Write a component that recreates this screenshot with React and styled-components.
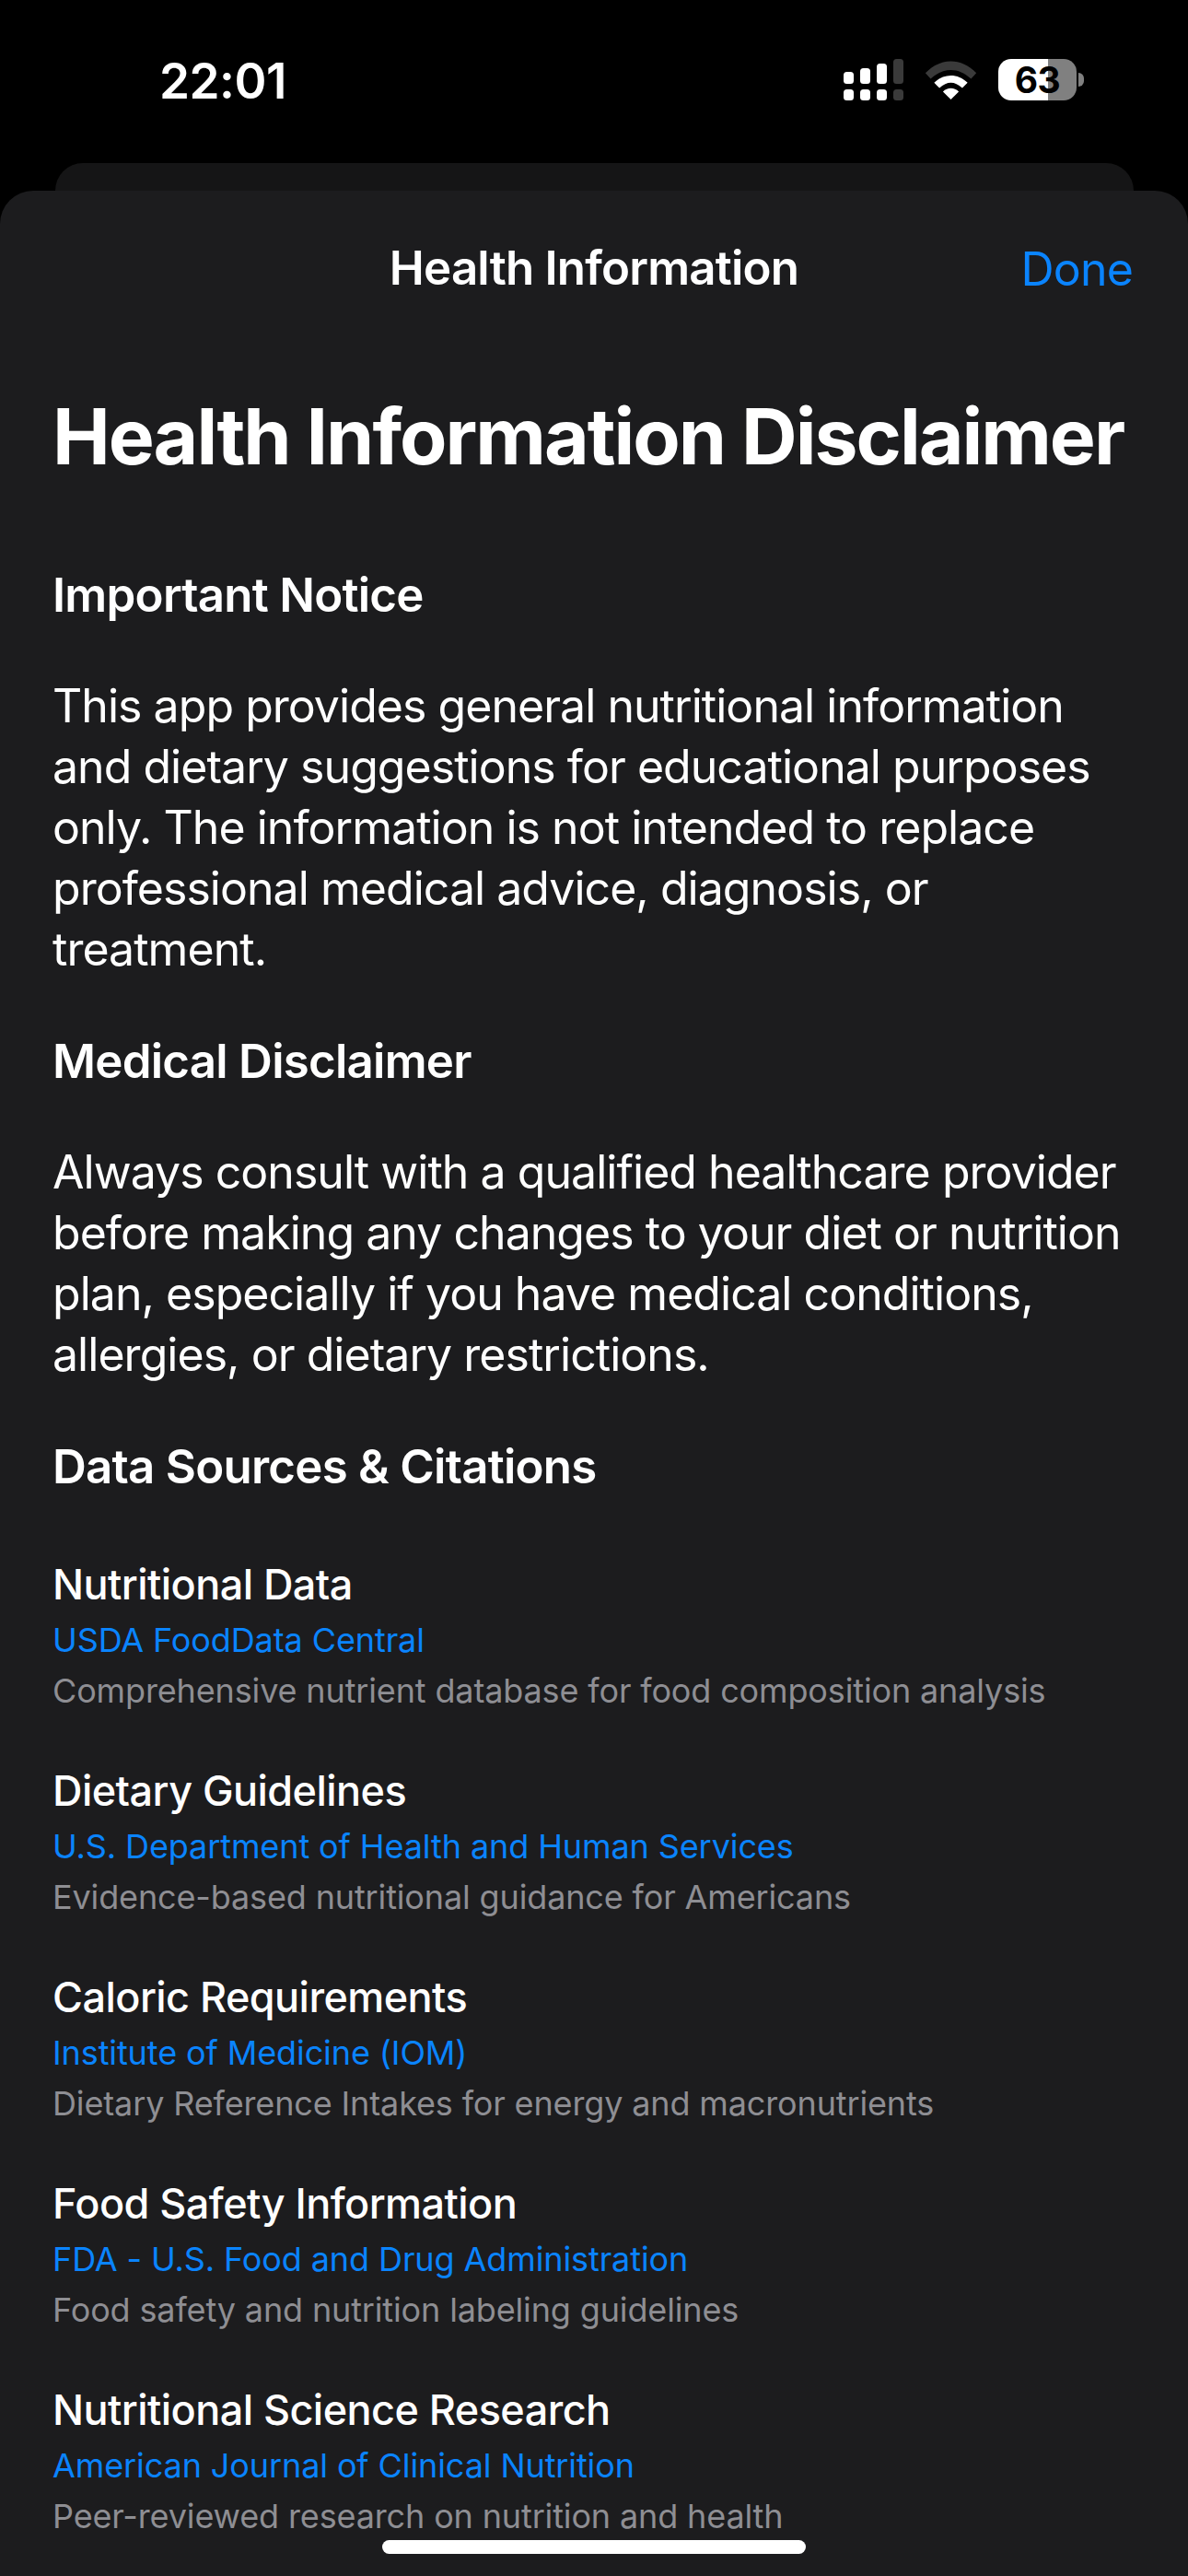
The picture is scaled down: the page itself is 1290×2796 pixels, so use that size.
import React from "react";
import styled, { createGlobalStyle } from "styled-components";

const GlobalStyle = createGlobalStyle`
  html, body {
    margin: 0;
    padding: 0;
    background: #000000;
  }
  * { box-sizing: border-box; }
`;

const Screen = styled.div`
  position: relative;
  width: 1290px;
  height: 2796px;
  overflow: hidden;
  background: #000000;
  color: #ffffff;
  font-family: Inter, "Liberation Sans", sans-serif;
`;

const StatusBar = styled.div`
  height: 177px;
  padding: 60px 0 0 173px;
  display: flex;
  align-items: flex-start;
  justify-content: space-between;
`;

const Time = styled.div`
  font-size: 53px;
  line-height: 56px;
  font-weight: 600;
  letter-spacing: -0.5px;
`;

const StatusIcons = styled.div`
  display: flex;
  align-items: center;
  gap: 23px;
  padding: 4px 113px 0 0;
`;

const BatteryWrap = styled.div`
  display: flex;
  align-items: center;
  gap: 2px;
`;

const BatteryBody = styled.div`
  width: 85px;
  height: 45px;
  border-radius: 14px;
  background: linear-gradient(90deg, #ffffff 0 ${(p) => p.$level}%, #808080 ${(p) => p.$level}% 100%);
  color: #000000;
  font-size: 39px;
  font-weight: 700;
  line-height: 45px;
  letter-spacing: -0.5px;
  text-align: center;
`;

const BatteryCap = styled.div`
  width: 6px;
  height: 15px;
  border-radius: 0 8px 8px 0;
  background: #808080;
`;

const BackCard = styled.div`
  width: 1171px;
  height: 30px;
  margin-left: 60px;
  background: #151516;
  border-radius: 30px 30px 0 0;
`;

const Sheet = styled.div`
  height: 2589px;
  background: #1c1c1e;
  border-radius: 36px 36px 0 0;
  overflow: hidden;
`;

const NavBar = styled.div`
  position: relative;
  height: 120px;
  padding: 54px 60px 0 58px;
  display: flex;
  align-items: flex-start;
  justify-content: flex-end;
`;

const NavTitle = styled.div`
  position: absolute;
  left: 0;
  right: 0;
  top: 53px;
  text-align: center;
  font-size: 51px;
  line-height: 62px;
  font-weight: 600;
  letter-spacing: -0.8px;
`;

const DoneButton = styled.button`
  padding: 0;
  border: none;
  background: none;
  color: #0a84ff;
  font: inherit;
  font-size: 50px;
  line-height: 62px;
  letter-spacing: -0.8px;
`;

const Content = styled.div`
  padding: 96px 57px 0;
`;

const PageTitle = styled.h1`
  margin: 0 0 90px;
  font-size: 84px;
  line-height: 102px;
  font-weight: 700;
  letter-spacing: -2px;
  white-space: nowrap;
`;

const SectionTitle = styled.h2`
  margin: 0 0 56px;
  font-size: 51px;
  line-height: 62px;
  font-weight: 600;
  letter-spacing: -0.75px;
`;

const Body = styled.p`
  margin: 0 0 58px;
  font-size: 50px;
  line-height: 66px;
  font-weight: 400;
  letter-spacing: -0.96px;
  white-space: pre;
`;

const SourceList = styled.div`
  display: flex;
  flex-direction: column;
  gap: 55px;
  padding-top: 12px;
`;

const Source = styled.div`
  display: flex;
  flex-direction: column;
`;

const SourceName = styled.div`
  font-size: 45px;
  line-height: 58px;
  font-weight: 500;
  letter-spacing: -0.55px;
`;

const SourceLink = styled.a`
  margin-top: 6px;
  color: #0a84ff;
  font-size: 36px;
  line-height: 50px;
  letter-spacing: -0.1px;
`;

const SourceNote = styled.div`
  margin-top: 5px;
  color: #8e8e93;
  font-size: 36px;
  line-height: 50px;
  letter-spacing: -0.14px;
`;

const HomeIndicator = styled.div`
  position: absolute;
  left: 415px;
  bottom: 24px;
  width: 460px;
  height: 15px;
  border-radius: 8px;
  background: #ffffff;
`;

const SignalIcon = () => (
  <svg width="65" height="45" viewBox="0 0 65 45">
    <g fill="#ffffff">
      <rect x="0" y="14" width="11" height="13" rx="3.5" />
      <rect x="18" y="10" width="11" height="17" rx="3.5" />
      <rect x="36" y="5" width="11" height="22" rx="3.5" />
      <rect x="0" y="33" width="11" height="12" rx="3.5" />
      <rect x="18" y="33" width="11" height="12" rx="3.5" />
      <rect x="36" y="33" width="11" height="12" rx="3.5" />
    </g>
    <g fill="#3a3a3a">
      <rect x="54" y="0" width="11" height="27" rx="3.5" />
      <rect x="54" y="33" width="11" height="12" rx="3.5" />
    </g>
  </svg>
);

const WifiIcon = () => (
  <svg width="57" height="42" viewBox="0 0 58 44">
    <path d="M0 14 C17 -4 41 -4 58 14 L52 20.500 C38 7 20 7 6 20.500 Z" fill="#3a3a3a" />
    <path d="M10 25 C21 14 37 14 48 25 L42 31 C33 23 25 23 16 31 Z" fill="#ffffff" />
    <path d="M20 35 C25 30 33 30 38 35 L29 44 Z" fill="#ffffff" />
  </svg>
);

const sources = [
  ["Nutritional Data", "USDA FoodData Central", "Comprehensive nutrient database for food composition analysis"],
  ["Dietary Guidelines", "U.S. Department of Health and Human Services", "Evidence-based nutritional guidance for Americans"],
  ["Caloric Requirements", "Institute of Medicine (IOM)", "Dietary Reference Intakes for energy and macronutrients"],
  ["Food Safety Information", "FDA - U.S. Food and Drug Administration", "Food safety and nutrition labeling guidelines"],
  ["Nutritional Science Research", "American Journal of Clinical Nutrition", "Peer-reviewed research on nutrition and health"],
];

const App = () => {
  return (
    <Screen>
      <GlobalStyle />
      <StatusBar>
        <Time>22:01</Time>
        <StatusIcons>
          <SignalIcon />
          <WifiIcon />
          <BatteryWrap>
            <BatteryBody $level={63.5}>63</BatteryBody>
            <BatteryCap />
          </BatteryWrap>
        </StatusIcons>
      </StatusBar>
      <BackCard />
      <Sheet>
        <NavBar>
          <NavTitle>Health Information</NavTitle>
          <DoneButton>Done</DoneButton>
        </NavBar>
        <Content>
          <PageTitle>Health Information Disclaimer</PageTitle>
          <SectionTitle>Important Notice</SectionTitle>
          <Body>
            {"This app provides general nutritional information\nand dietary suggestions for educational purposes\nonly. The information is not intended to replace\nprofessional medical advice, diagnosis, or\ntreatment."}
          </Body>
          <SectionTitle>Medical Disclaimer</SectionTitle>
          <Body>
            {"Always consult with a qualified healthcare provider\nbefore making any changes to your diet or nutrition\nplan, especially if you have medical conditions,\nallergies, or dietary restrictions."}
          </Body>
          <SectionTitle>{"Data Sources & Citations"}</SectionTitle>
          <SourceList>
            {sources.map(([name, link, note]) => (
              <Source key={name}>
                <SourceName>{name}</SourceName>
                <SourceLink>{link}</SourceLink>
                <SourceNote>{note}</SourceNote>
              </Source>
            ))}
          </SourceList>
        </Content>
      </Sheet>
      <HomeIndicator />
    </Screen>
  );
};

export default App;
